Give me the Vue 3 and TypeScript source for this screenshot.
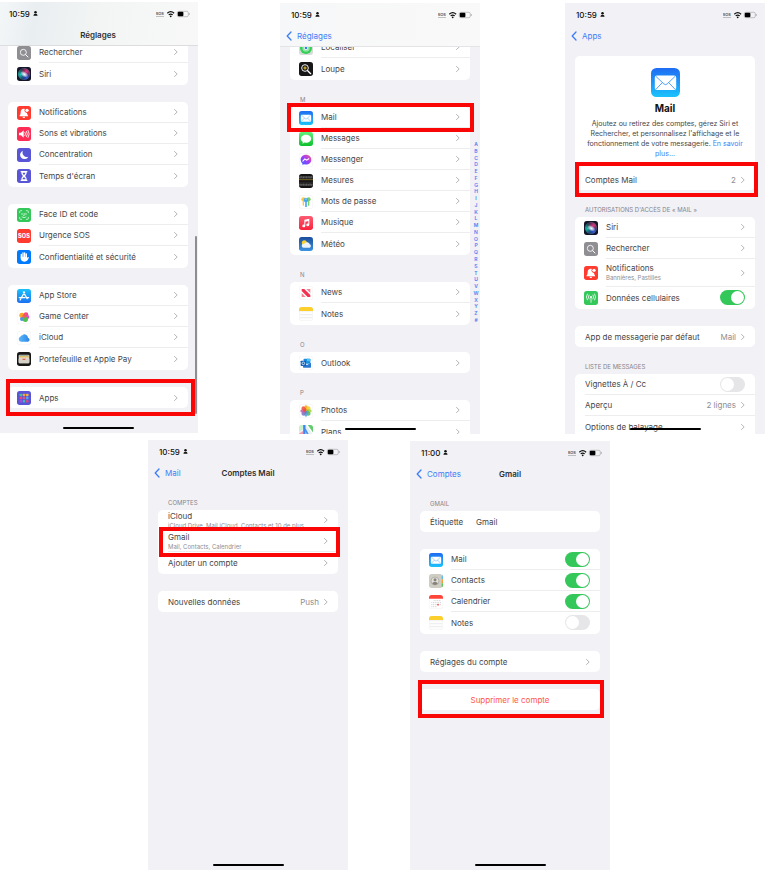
<script setup lang="ts">
interface Row {
  kind?: 'link' | 'toggle' | 'field' | 'danger'
  label: string
  sub?: string
  value?: string
  icon?: string
  on?: boolean
  dense?: boolean
  mark?: string
}

interface Section {
  title?: string
  hero?: boolean
  rows: Row[]
}

interface Screen {
  id: string
  time: string
  title?: string
  back?: string
  bar?: string
  index?: boolean
  scrollbar?: boolean
  sections: Section[]
}

const topRow: Screen[] = [
  {
    id: 'reglages',
    time: '10:59',
    title: 'Réglages',
    bar: 'bar-tinted',
    scrollbar: true,
    sections: [
      { rows: [{ label: 'Rechercher', icon: 'search' }, { label: 'Siri', icon: 'siri' }] },
      {
        rows: [
          { label: 'Notifications', icon: 'bell' },
          { label: 'Sons et vibrations', icon: 'sound' },
          { label: 'Concentration', icon: 'moon' },
          { label: "Temps d'écran", icon: 'hourglass' },
        ],
      },
      {
        rows: [
          { label: 'Face ID et code', icon: 'face' },
          { label: 'Urgence SOS', icon: 'sos' },
          { label: 'Confidentialité et sécurité', icon: 'hand' },
        ],
      },
      {
        rows: [
          { label: 'App Store', icon: 'store' },
          { label: 'Game Center', icon: 'game' },
          { label: 'iCloud', icon: 'cloud' },
          { label: 'Portefeuille et Apple Pay', icon: 'wallet' },
        ],
      },
      { rows: [{ label: 'Apps', icon: 'apps', mark: 'mark-apps' }] },
    ],
  },
  {
    id: 'apps',
    time: '10:59',
    back: 'Réglages',
    bar: 'bar-light',
    index: true,
    sections: [
      { rows: [{ label: 'Localiser', icon: 'find' }, { label: 'Loupe', icon: 'loupe' }] },
      {
        title: 'M',
        rows: [
          { label: 'Mail', icon: 'mail', mark: 'mark-mail' },
          { label: 'Messages', icon: 'messages' },
          { label: 'Messenger', icon: 'messenger' },
          { label: 'Mesures', icon: 'measure' },
          { label: 'Mots de passe', icon: 'keys' },
          { label: 'Musique', icon: 'music' },
          { label: 'Météo', icon: 'weather' },
        ],
      },
      { title: 'N', rows: [{ label: 'News', icon: 'news' }, { label: 'Notes', icon: 'notes' }] },
      { title: 'O', rows: [{ label: 'Outlook', icon: 'outlook' }] },
      { title: 'P', rows: [{ label: 'Photos', icon: 'photos' }, { label: 'Plans', icon: 'maps' }] },
    ],
  },
  {
    id: 'mail',
    time: '10:59',
    back: 'Apps',
    sections: [
      { hero: true, rows: [{ label: 'Comptes Mail', value: '2', mark: 'mark-accounts' }] },
      {
        title: "Autorisations d'accès de « Mail »",
        rows: [
          { label: 'Siri', icon: 'siri' },
          { label: 'Rechercher', icon: 'search' },
          { label: 'Notifications', icon: 'bell', sub: 'Bannières, Pastilles' },
          { kind: 'toggle', label: 'Données cellulaires', icon: 'cell', on: true },
        ],
      },
      { rows: [{ label: 'App de messagerie par défaut', value: 'Mail' }] },
      {
        title: 'Liste de messages',
        rows: [
          { kind: 'toggle', label: 'Vignettes À / Cc', on: false },
          { label: 'Aperçu', value: '2 lignes' },
          { label: 'Options de balayage' },
        ],
      },
    ],
  },
]

const bottomRow: Screen[] = [
  {
    id: 'comptes',
    time: '10:59',
    back: 'Mail',
    title: 'Comptes Mail',
    sections: [
      {
        title: 'Comptes',
        rows: [
          { label: 'iCloud', sub: 'iCloud Drive, Mail iCloud, Contacts et 10 de plus', dense: true },
          { label: 'Gmail', sub: 'Mail, Contacts, Calendrier', dense: true, mark: 'mark-gmail' },
          { label: 'Ajouter un compte' },
        ],
      },
      { rows: [{ label: 'Nouvelles données', value: 'Push' }] },
    ],
  },
  {
    id: 'gmail',
    time: '11:00',
    back: 'Comptes',
    title: 'Gmail',
    sections: [
      { title: 'Gmail', rows: [{ kind: 'field', label: 'Étiquette', value: 'Gmail' }] },
      {
        rows: [
          { kind: 'toggle', label: 'Mail', icon: 'mail', on: true },
          { kind: 'toggle', label: 'Contacts', icon: 'contacts', on: true },
          { kind: 'toggle', label: 'Calendrier', icon: 'calendar', on: true },
          { kind: 'toggle', label: 'Notes', icon: 'notes', on: false },
        ],
      },
      { rows: [{ label: 'Réglages du compte' }] },
      { rows: [{ kind: 'danger', label: 'Supprimer le compte', mark: 'mark-delete' }] },
    ],
  },
]

const rows = [
  { name: 'row-top', screens: topRow },
  { name: 'row-bottom', screens: bottomRow },
]
const letters = [...'ABCDEFGHIJKLMNOPQRSTUVWXYZ#']
const petals = ['#f7a11b', '#f2d21b', '#a8cf3a', '#4bb86a', '#4a9fd8', '#7b6fc4', '#c05fa6', '#ee4b3c']
const tagFor = (row: Row) =>
  row.kind === 'toggle' || row.kind === 'field' ? 'label' : row.kind === 'danger' ? 'button' : 'a'
</script>

<template>
  <svg class="sprite" aria-hidden="true">
    <defs>
      <linearGradient id="g-mail" x1="0" y1="0" x2="0" y2="1"><stop offset="0" stop-color="#1f6cf3" /><stop offset="1" stop-color="#1cc3fb" /></linearGradient>
      <linearGradient id="g-store" x1="0" y1="0" x2="0" y2="1"><stop offset="0" stop-color="#19c2fb" /><stop offset="1" stop-color="#1c70f2" /></linearGradient>
      <linearGradient id="g-green" x1="0" y1="0" x2="0" y2="1"><stop offset="0" stop-color="#62f07a" /><stop offset="1" stop-color="#0bbf2b" /></linearGradient>
      <linearGradient id="g-music" x1="0" y1="0" x2="0" y2="1"><stop offset="0" stop-color="#fb5c74" /><stop offset="1" stop-color="#fa233b" /></linearGradient>
      <linearGradient id="g-weather" x1="0" y1="0" x2="0" y2="1"><stop offset="0" stop-color="#1a4e9c" /><stop offset="1" stop-color="#3d93e0" /></linearGradient>
      <linearGradient id="g-cloud" x1="0" y1="0" x2="1" y2="0"><stop offset="0" stop-color="#59b9f8" /><stop offset="1" stop-color="#2b83ea" /></linearGradient>
      <linearGradient id="g-messenger" x1="0" y1="1" x2="1" y2="0"><stop offset="0" stop-color="#2f6bff" /><stop offset=".5" stop-color="#9c3bfa" /><stop offset="1" stop-color="#ff5b7f" /></linearGradient>
      <radialGradient id="g-siri-a" cx=".2" cy=".55" r=".5"><stop offset="0" stop-color="#17c5b5" /><stop offset="1" stop-color="#17c5b5" stop-opacity="0" /></radialGradient>
      <radialGradient id="g-siri-b" cx=".7" cy=".3" r=".5"><stop offset="0" stop-color="#e63b86" /><stop offset="1" stop-color="#e63b86" stop-opacity="0" /></radialGradient>
      <radialGradient id="g-siri-c" cx=".7" cy=".8" r=".45"><stop offset="0" stop-color="#3457e0" /><stop offset="1" stop-color="#3457e0" stop-opacity="0" /></radialGradient>
      <radialGradient id="g-siri-d" cx=".5" cy=".5" r=".5"><stop offset="0" stop-color="#fff" /><stop offset=".4" stop-color="#c9e8f5" stop-opacity=".8" /><stop offset="1" stop-color="#fff" stop-opacity="0" /></radialGradient>
      <clipPath id="c-tile"><rect width="42" height="42" rx="8" /></clipPath>
    </defs>

    <symbol id="i-search" viewBox="0 0 42 42">
      <rect width="42" height="42" rx="8" fill="#8e8e93" />
      <circle cx="19" cy="19" r="9" fill="none" stroke="#fff" stroke-width="2.600" />
      <path d="M26 26l7 7" stroke="#fff" stroke-width="3" stroke-linecap="round" />
    </symbol>
    <symbol id="i-siri" viewBox="0 0 42 42">
      <rect width="42" height="42" rx="8" fill="#15152b" />
      <circle cx="21" cy="21" r="18" fill="url(#g-siri-a)" />
      <circle cx="21" cy="21" r="18" fill="url(#g-siri-b)" />
      <circle cx="21" cy="21" r="18" fill="url(#g-siri-c)" />
      <circle cx="21" cy="21" r="17" fill="none" stroke="#5fc6c0" stroke-opacity=".45" stroke-width="1.5" />
      <ellipse cx="22" cy="22" rx="13" ry="8" transform="rotate(30 22 22)" fill="url(#g-siri-d)" />
    </symbol>
    <symbol id="i-bell" viewBox="0 0 42 42">
      <rect width="42" height="42" rx="8" fill="#ff3b30" />
      <path d="M20 8c-6 0-9 4.500-9 10 0 6-1 8-3.500 11 0 1 .5 1.500 1.500 1.500h23c1 0 1.500-.5 1.500-1.500C31 26 30.500 24 30 21a8 8 0 0 1-6.500-12.200C22.500 8.200 21 8 20 8z" fill="#fff" />
      <path d="M16.500 32h8a4 4 0 0 1-8 0z" fill="#fff" />
      <circle cx="30" cy="13" r="5" fill="#fff" />
    </symbol>
    <symbol id="i-sound" viewBox="0 0 42 42">
      <rect width="42" height="42" rx="8" fill="#ff2d55" />
      <path d="M6 17h6l8-7v22l-8-7H6z" fill="#fff" />
      <path d="M24 16q4 5 0 10M28.500 13q6 8 0 16M33 10q8 11 0 22" fill="none" stroke="#fff" stroke-width="2.500" stroke-linecap="round" />
    </symbol>
    <symbol id="i-moon" viewBox="0 0 42 42">
      <rect width="42" height="42" rx="8" fill="#5856d6" />
      <path d="M18 8a13 13 0 1 0 16 18A13 13 0 0 1 18 8z" fill="#fff" />
    </symbol>
    <symbol id="i-hourglass" viewBox="0 0 42 42">
      <rect width="42" height="42" rx="8" fill="#5856d6" />
      <path d="M11 6h20v4h-2c0 6-2 8-5 11 3 3 5 5 5 11h2v4H11v-4h2c0-6 2-8 5-11-3-3-5-5-5-11h-2z" fill="#fff" />
      <path d="M17 11h8c0 3-2 5-4 7-2-2-4-4-4-7zM16.500 31c0-4 2.500-5 4.500-6 2 1 4.500 2 4.500 6z" fill="#5856d6" />
    </symbol>
    <symbol id="i-face" viewBox="0 0 42 42">
      <rect width="42" height="42" rx="8" fill="#34c759" />
      <path d="M8 14v-3q0-3 3-3h3M28 8h3q3 0 3 3v3M34 28v3q0 3-3 3h-3M14 34h-3q-3 0-3-3v-3M15 16v4M27 16v4M21.500 16v7h-2M15 27q6 5 12 0" fill="none" stroke="#fff" stroke-width="2" stroke-linecap="round" />
    </symbol>
    <symbol id="i-hand" viewBox="0 0 42 42">
      <rect width="42" height="42" rx="8" fill="#007aff" />
      <path d="M13 22V13M18 20V9M23 20V8.500M28 21V12" stroke="#fff" stroke-width="4" stroke-linecap="round" />
      <path d="M11 20h19v4l3-3q3-1 2.500 1.500C33 30 30 35 22 35S11 30 11 24z" fill="#fff" />
    </symbol>
    <symbol id="i-store" viewBox="0 0 42 42">
      <rect width="42" height="42" rx="8" fill="url(#g-store)" />
      <path d="M23 9L12.500 27M19 9l11.500 20M7 26h17M30 26h5M11 30l-1.500 3" stroke="#fff" stroke-width="3.800" stroke-linecap="round" />
    </symbol>
    <symbol id="i-game" viewBox="0 0 42 42">
      <rect x=".5" y=".5" width="41" height="41" rx="8" fill="#fff" stroke="#e4e4e8" />
      <circle cx="15" cy="16" r="8" fill="#f9a825" />
      <circle cx="27" cy="14" r="7" fill="#f9497a" />
      <circle cx="15" cy="27" r="6" fill="#4f8ff5" />
      <circle cx="31" cy="21" r="6" fill="#d94fd0" />
      <circle cx="25" cy="28" r="8" fill="#4cc24a" />
      <circle cx="22" cy="19" r="6" fill="#ef5c4c" opacity=".85" />
    </symbol>
    <symbol id="i-cloud" viewBox="0 0 42 42">
      <rect x=".5" y=".5" width="41" height="41" rx="8" fill="#fff" stroke="#e4e4e8" />
      <path d="M12 32a7.500 7.500 0 0 1-2-14.500A7 7 0 0 1 16 13a10 10 0 0 1 17 7 6.200 6.200 0 0 1 0 12z" fill="url(#g-cloud)" />
    </symbol>
    <symbol id="i-wallet" viewBox="0 0 42 42">
      <rect width="42" height="42" rx="8" fill="#171717" />
      <rect x="5" y="8" width="32" height="26" rx="3" fill="#d9d5cc" />
      <path d="M7 10h28v3H7z" fill="#7e9a83" /><path d="M7 13h28v4H7z" fill="#edc04f" /><path d="M7 17h28v3H7z" fill="#e6e1d2" />
      <path d="M5 20h9q2 0 3 2 4 4 8 0 1-2 3-2h9v11q0 3-3 3H8q-3 0-3-3z" fill="#d6d2c8" />
      <path d="M15 20h12q-2 4-6 4t-6-4z" fill="#e2574b" />
    </symbol>
    <symbol id="i-apps" viewBox="0 0 42 42">
      <rect width="42" height="42" rx="8" fill="#5856d6" />
      <rect x="8" y="8" width="7.500" height="7.500" rx="2" fill="#3fc39a" /><rect x="17.500" y="8" width="7.500" height="7.500" rx="2" fill="#f2a13c" /><rect x="27" y="8" width="7.500" height="7.500" rx="2" fill="#f0b14a" />
      <rect x="8" y="17.500" width="7.500" height="7.500" rx="2" fill="#ec4778" /><rect x="17.500" y="17.500" width="7.500" height="7.500" rx="2" fill="#e0527e" /><rect x="27" y="17.500" width="7.500" height="7.500" rx="2" fill="#4fa7ee" />
      <rect x="8" y="27" width="7.500" height="7.500" rx="2" fill="#ab4bd8" /><rect x="17.500" y="27" width="7.500" height="7.500" rx="2" fill="#38b9bd" /><rect x="27" y="27" width="7.500" height="7.500" rx="2" fill="#e2467e" />
    </symbol>
    <symbol id="i-find" viewBox="0 0 42 42">
      <rect width="42" height="42" rx="8" fill="#d8dad9" />
      <circle cx="21" cy="21" r="18" fill="#35cf58" />
      <circle cx="21" cy="21" r="11" fill="#8fe7a0" />
      <circle cx="21" cy="21" r="6" fill="#fff" /><circle cx="21" cy="21" r="4" fill="#2f7ff0" />
    </symbol>
    <symbol id="i-loupe" viewBox="0 0 42 42">
      <rect width="42" height="42" rx="8" fill="#171717" />
      <circle cx="18" cy="18" r="10" fill="none" stroke="#fff" stroke-width="2.800" />
      <path d="M26 26l9 9" stroke="#fff" stroke-width="4" stroke-linecap="round" />
      <path d="M18 13v10M13 18h10" stroke="#fbd12c" stroke-width="2.800" />
    </symbol>
    <symbol id="i-mail" viewBox="0 0 42 42">
      <rect width="42" height="42" rx="8" fill="url(#g-mail)" />
      <rect x="5.500" y="11" width="31" height="21" rx="3" fill="#fff" />
      <path d="M7 12l11.500 11q2.500 2.200 5 0L35 12M7 31l9.500-10M35 31l-9.500-10" fill="none" stroke="#2b90f7" stroke-width="1.200" />
    </symbol>
    <symbol id="i-messages" viewBox="0 0 42 42">
      <rect width="42" height="42" rx="8" fill="url(#g-green)" />
      <path d="M21 8C12 8 5.500 13.300 5.500 20c0 4 2.500 7.500 6.200 9.700 0 2-1.200 3.800-2.700 5 3 0 5.600-1.200 7.500-3.100 1.500.3 3 .4 4.500.4 9 0 15.500-5.300 15.500-12S30 8 21 8z" fill="#fff" />
    </symbol>
    <symbol id="i-messenger" viewBox="0 0 42 42">
      <rect x=".5" y=".5" width="41" height="41" rx="8" fill="#fff" stroke="#e4e4e8" />
      <path d="M21 5C12 5 5 11.500 5 20.200c0 4.600 2 8.500 5.200 11.200l.2 4.600 4.700-2q2.800.8 5.900.8c9 0 16-6.300 16-14.800S30 5 21 5z" fill="url(#g-messenger)" />
      <path d="M11.500 24.500l6-7 5 4 7-4" fill="none" stroke="#fff" stroke-width="3.200" stroke-linecap="round" stroke-linejoin="round" />
    </symbol>
    <symbol id="i-measure" viewBox="0 0 42 42">
      <rect width="42" height="42" rx="8" fill="#151515" />
      <path d="M0 10h42M0 32h42" stroke="#3a3a3a" stroke-width="7" />
      <path d="M3 7v6M8 7v4M13 7v6M18 7v4M23 7v6M28 7v4M33 7v6M38 7v4M3 29v6M8 31v4M13 29v6M18 31v4M23 29v6M28 31v4M33 29v6M38 31v4" stroke="#a8a8a8" stroke-width="1.300" />
      <path d="M0 17h42" stroke="#d9b634" stroke-width="1.500" /><path d="M0 25h42" stroke="#555" stroke-width="1" />
    </symbol>
    <symbol id="i-keys" viewBox="0 0 42 42">
      <rect x=".5" y=".5" width="41" height="41" rx="8" fill="#fff" stroke="#e4e4e8" />
      <circle cx="13" cy="13" r="6" fill="#f9c740" /><path d="M11 17h4v14l-2 2-2-2z" fill="#f9c740" />
      <circle cx="29" cy="13" r="6" fill="#7cd06a" /><path d="M27 17h4v14l-2 2-2-2z" fill="#7cd06a" />
      <circle cx="21" cy="15" r="7" fill="#46a9ee" /><path d="M18.500 19h5v15L21 37l-2.500-3z" fill="#46a9ee" /><circle cx="21" cy="12" r="1.800" fill="#fff" />
    </symbol>
    <symbol id="i-music" viewBox="0 0 42 42">
      <rect width="42" height="42" rx="8" fill="url(#g-music)" />
      <path d="M16 11.500L31 8v18.500a4.500 4 0 1 1-3-3.800V15l-9 2v13a4.500 4 0 1 1-3-3.800z" fill="#fff" />
    </symbol>
    <symbol id="i-weather" viewBox="0 0 42 42">
      <rect width="42" height="42" rx="8" fill="url(#g-weather)" />
      <circle cx="16" cy="17" r="7.500" fill="#fbd02f" />
      <path d="M14 32a6 6 0 0 1 0-12 5 5 0 0 1 3.500-1 8 8 0 0 1 14.500 3 5.200 5.200 0 0 1 0 10z" fill="#eaf2fb" />
    </symbol>
    <symbol id="i-news" viewBox="0 0 42 42">
      <rect x=".5" y=".5" width="41" height="41" rx="8" fill="#fff" stroke="#e4e4e8" />
      <path d="M8 9h8l18 18v6h-8L8 15z" fill="#f2304f" />
      <path d="M8 21l12 12H8zM34 21L22 9h12z" fill="#f77f92" />
    </symbol>
    <symbol id="i-notes" viewBox="0 0 42 42">
      <rect x=".5" y=".5" width="41" height="41" rx="8" fill="#fdfdfd" stroke="#e4e4e8" />
      <path d="M0 12V8q0-8 8-8h26q8 0 8 8v4z" fill="#fdcf2c" />
      <path d="M0 14h42" stroke="#bdbdbd" stroke-dasharray="1.500 1.500" /><path d="M3 23h36M3 32h36" stroke="#dcdce0" stroke-width="1.500" />
    </symbol>
    <symbol id="i-outlook" viewBox="0 0 42 42">
      <rect x=".5" y=".5" width="41" height="41" rx="8" fill="#fff" stroke="#e4e4e8" />
      <rect x="14" y="8" width="20" height="15" rx="1.500" fill="#1b8fe0" /><path d="M24 8h8.500q1.500 0 1.500 1.500V16H24z" fill="#4cc4f5" />
      <path d="M12 20l12 7 12-7v13q0 2-2 2H14q-2 0-2-2z" fill="#2a78cf" />
      <rect x="5" y="14" width="16" height="16" rx="2" fill="#0f5fb8" />
      <circle cx="13" cy="22" r="4" fill="none" stroke="#fff" stroke-width="2.200" />
    </symbol>
    <symbol id="i-photos" viewBox="0 0 42 42">
      <rect x=".5" y=".5" width="41" height="41" rx="8" fill="#fff" stroke="#e4e4e8" />
      <rect v-for="(c, i) in petals" :key="c" x="15.500" y="4" width="11" height="17" rx="5.500" :fill="c" opacity=".85" :transform="`rotate(${i * 45} 21 21)`" />
    </symbol>
    <symbol id="i-maps" viewBox="0 0 42 42">
      <g clip-path="url(#c-tile)">
        <rect width="42" height="42" fill="#e9eef0" />
        <path d="M0 0h14v10L0 20z" fill="#c9efcb" /><path d="M24 0h18v24z" fill="#5fce6b" /><path d="M0 26l12-8v24H0z" fill="#f29ab0" />
        <path d="M16 0v42" stroke="#3a86f0" stroke-width="7" /><path d="M18 12l16 30" stroke="#4a90f2" stroke-width="5" /><path d="M24 0l18 26" stroke="#fff" stroke-width="4" />
      </g>
    </symbol>
    <symbol id="i-cell" viewBox="0 0 42 42">
      <rect width="42" height="42" rx="8" fill="#34c759" />
      <circle cx="21" cy="18" r="3" fill="#fff" />
      <path d="M21 19v15M15 12q-4 6 0 12M27 12q4 6 0 12M10 9q-6 9 0 18M32 9q6 9 0 18" fill="none" stroke="#fff" stroke-width="2.400" stroke-linecap="round" />
    </symbol>
    <symbol id="i-contacts" viewBox="0 0 42 42">
      <g clip-path="url(#c-tile)">
        <rect width="42" height="42" fill="#cfcdc3" />
        <rect x="36" width="6" height="42" fill="#f3f3f0" /><path d="M37 4h5v12h-5z" fill="#5bb7f0" /><path d="M37 16h5v12h-5z" fill="#f59b34" /><path d="M37 28h5v11h-5z" fill="#5fc95c" />
        <circle cx="18" cy="21" r="12" fill="#e2e0d8" stroke="#8c8a82" stroke-width="1.500" />
        <circle cx="18" cy="17.500" r="4.500" fill="#85837b" /><path d="M9.500 28q2.500-5 8.500-5t8.500 5q-3 5-8.500 5t-8.500-5z" fill="#85837b" />
      </g>
    </symbol>
    <symbol id="i-calendar" viewBox="0 0 42 42">
      <rect x=".5" y=".5" width="41" height="41" rx="8" fill="#fff" stroke="#e4e4e8" />
      <path d="M0 11V8q0-8 8-8h26q8 0 8 8v3z" fill="#ff453a" />
      <path d="M14 17h22M7 23h29M7 29h29M7 35h17" stroke="#b9b9be" stroke-width="2" stroke-dasharray="3 2.200" /><circle cx="27" cy="29" r="2.500" fill="#ff453a" />
    </symbol>
    <symbol id="i-chevron" viewBox="0 0 4 8"><path d="M.5 1.500L3.200 4L.5 6.500" fill="none" stroke="currentColor" stroke-width=".9" stroke-linecap="round" stroke-linejoin="round" /></symbol>
    <symbol id="i-back" viewBox="0 0 6 10"><path d="M5 1L1.200 5L5 9" fill="none" stroke="currentColor" stroke-width="1.300" stroke-linecap="round" stroke-linejoin="round" /></symbol>
    <symbol id="i-person" viewBox="0 0 6 6"><circle cx="3" cy="1.600" r="1.500" fill="currentColor" /><path d="M.5 5.800q0-2.600 2.500-2.600t2.500 2.600z" fill="currentColor" /></symbol>
  </svg>

  <main class="page">
    <div v-for="line in rows" :key="line.name" class="line" :class="line.name">
      <section v-for="screen in line.screens" :key="screen.id" class="phone" :class="`phone-${screen.id}`">
        <header class="bar" :class="screen.bar">
          <div class="status">
            <span class="time">{{ screen.time }}</span>
            <svg class="person"><use href="#i-person" /></svg>
            <svg class="signals" viewBox="0 0 34 8">
              <text class="signal-text" x="3.800" y="4.600" text-anchor="middle">SOS</text>
              <path d="M.5 6.500h7" stroke="#888" stroke-width="1" stroke-dasharray="1 1" />
              <path d="M11.300 3.200q3.400-3 6.800 0M12.700 4.900q2-1.700 4 0" fill="none" stroke="#111" stroke-width="1.200" />
              <circle cx="14.700" cy="6.300" r=".9" fill="#111" />
              <rect x="21.300" y="1.300" width="11" height="5.400" rx="1.500" fill="none" stroke="#aaa" stroke-width=".7" />
              <rect x="21.800" y="1.800" width="5.600" height="4.400" rx="1" fill="#000" />
              <path d="M33.300 3v2" stroke="#aaa" stroke-width=".8" />
            </svg>
          </div>
          <div class="nav">
            <a v-if="screen.back" class="back" href="#">
              <svg class="back-icon"><use href="#i-back" /></svg>{{ screen.back }}
            </a>
            <h2 v-if="screen.title" class="title">{{ screen.title }}</h2>
          </div>
        </header>

        <div class="content">
          <div v-for="(section, s) in screen.sections" :key="s" class="group">
            <h3 v-if="section.title" class="group-title">{{ section.title }}</h3>
            <div class="card">
              <div v-if="section.hero" class="hero">
                <svg class="hero-icon"><use href="#i-mail" /></svg>
                <h1 class="hero-title">Mail</h1>
                <p class="hero-text">
                  Ajoutez ou retirez des comptes, gérez Siri et Rechercher, et personnalisez l'affichage et le
                  fonctionnement de votre messagerie. <a href="#">En savoir plus...</a>
                </p>
              </div>
              <ul class="list">
                <li v-for="row in section.rows" :key="row.label" class="item" :class="[row.mark, { marked: row.mark }]">
                  <component
                    :is="tagFor(row)"
                    class="row"
                    :class="{ 'has-icon': row.icon, tall: row.sub && !row.dense, dense: row.dense, danger: row.kind === 'danger' }"
                    :href="tagFor(row) === 'a' ? '#' : undefined"
                    :type="row.kind === 'danger' ? 'button' : undefined"
                  >
                    <svg v-if="row.icon === 'sos'" class="icon" viewBox="0 0 42 42">
                      <rect width="42" height="42" rx="8" fill="#ff3b30" />
                      <text class="sos-text" x="21" y="27" text-anchor="middle">SOS</text>
                    </svg>
                    <svg v-else-if="row.icon" class="icon"><use :href="`#i-${row.icon}`" /></svg>
                    <span class="body">
                      <span class="text" :class="{ 'field-label': row.kind === 'field' }">
                        <span class="label">{{ row.label }}</span>
                        <span v-if="row.sub" class="sub">{{ row.sub }}</span>
                      </span>
                      <input v-if="row.kind === 'toggle'" class="switch" type="checkbox" role="switch" :checked="row.on" />
                      <input v-else-if="row.kind === 'field'" class="field" type="text" :value="row.value" />
                      <template v-else-if="row.kind !== 'danger'">
                        <span v-if="row.value" class="value">{{ row.value }}</span>
                        <svg class="chevron"><use href="#i-chevron" /></svg>
                      </template>
                    </span>
                  </component>
                </li>
              </ul>
            </div>
          </div>
        </div>

        <nav v-if="screen.index" class="index" aria-label="Index">
          <a v-for="letter in letters" :key="letter" href="#">{{ letter }}</a>
        </nav>
        <div v-if="screen.scrollbar" class="scrollbar"></div>
        <div class="home"><span class="home-line"></span></div>
      </section>
    </div>
  </main>
</template>

<style>
body {
  margin: 0;
  background: #fff;
}
</style>

<style scoped>
* {
  box-sizing: border-box;
}
a {
  color: inherit;
  text-decoration: none;
}
h1,
h2,
h3,
p,
ul {
  margin: 0;
  padding: 0;
  font-weight: 400;
  list-style: none;
}
svg {
  display: block;
  flex: none;
}
.sprite {
  position: absolute;
  width: 0;
  height: 0;
}
.page {
  display: flex;
  flex-direction: column;
  gap: 6px;
  min-height: 100vh;
  padding-top: 2px;
  overflow: hidden;
  font-family: Inter, Roboto, sans-serif;
  font-size: 8px;
  line-height: 10px;
  color: #464648;
}
.line {
  display: grid;
}
.row-top {
  grid-template-columns: 198fr 82fr 200fr 85fr 200fr 3fr;
}
.row-bottom {
  flex: 1;
  grid-template-columns: 148fr 200fr 62fr 200fr 158fr;
}
.phone {
  --edge-left: 10px;
  --edge-right: 10px;
  position: relative;
  display: flex;
  flex-direction: column;
  min-width: 0;
  overflow: hidden;
  background: #f2f1f6;
}
.phone + .phone {
  margin-top: 1px;
}
.row-top .phone {
  aspect-ratio: 200 / 431;
}
.row-top .phone-reglages {
  --edge-left: 8px;
  grid-column: 1;
  aspect-ratio: 198 / 431;
}
.phone-apps {
  grid-column: 3;
}
.phone-mail {
  grid-column: 5;
}
.phone-comptes {
  grid-column: 2;
}
.phone-gmail {
  grid-column: 4;
}

.bar {
  position: relative;
  z-index: 2;
  flex: none;
}
.bar-tinted {
  background: linear-gradient(100deg, #f4f7f8 0%, #e9eef1 18%, #f3f5f4 50%, #f8f8f9 100%);
  border-bottom: 1px solid #dddde0;
}
.bar-light {
  background: linear-gradient(100deg, #f6f7f8, #f9f9f9);
  border-bottom: 1px solid #e4e4e6;
}
.status {
  display: flex;
  align-items: center;
  height: 23px;
  padding-left: calc(var(--edge-left) + 1px);
  padding-right: 8px;
  color: #111;
}
.time {
  font-weight: 500;
}
.person {
  width: 5px;
  height: 5px;
  margin-left: 3px;
}
.signals {
  width: 34px;
  height: 8px;
  margin-left: auto;
}
.signal-text {
  font-size: 4px;
  font-weight: 600;
  fill: #555;
}
.sos-text {
  font-size: 17px;
  font-weight: 800;
  fill: #fff;
}
.nav {
  display: grid;
  grid-template-columns: 1fr auto 1fr;
  align-items: center;
  height: 20px;
  padding-left: calc(var(--edge-left) - 4px);
  padding-right: 6px;
}
.back {
  grid-column: 1;
  display: flex;
  align-items: center;
  gap: 5px;
  color: #3c7df8;
}
.back-icon {
  width: 6px;
  height: 10px;
}
.title {
  grid-column: 2;
  font-size: 8px;
  font-weight: 600;
  color: #2f2f31;
}

.content {
  flex: none;
  padding: 0 var(--edge-right) 0 var(--edge-left);
}
.phone-reglages .content {
  margin-top: -4px;
}
.phone-apps .content {
  margin-top: -10px;
}
.phone-mail .content {
  padding-top: 10px;
}
.group + .group {
  margin-top: 17px;
}
.group-title {
  height: 27px;
  padding: 16px 10px 0;
  font-size: 6px;
  line-height: 8px;
  text-transform: uppercase;
  color: #85858b;
}
.group + .group:has(.group-title) {
  margin-top: 0;
}
.card {
  background: #fff;
  border-radius: 5px;
}
.item {
  position: relative;
}
.item:last-child:not(:first-child) {
  padding-bottom: 1px;
}
.row {
  display: flex;
  gap: 8px;
  width: 100%;
  height: 21px;
  padding: 0 0 0 10px;
  border: 0;
  background: none;
  font: inherit;
  color: inherit;
}
.row.has-icon {
  padding-left: 9px;
}
.row.tall {
  height: 28px;
}
.icon {
  width: 14px;
  height: 14px;
  align-self: center;
}
.body {
  flex: 1;
  display: flex;
  align-items: center;
  gap: 5px;
  min-width: 0;
  padding-right: 10px;
}
.item:not(:last-child) .body {
  border-bottom: 1px solid #ededf0;
}
.text {
  flex: 1;
  display: flex;
  flex-direction: column;
  white-space: nowrap;
}
.text .label {
  line-height: 10px;
}
.sub {
  font-size: 6px;
  line-height: 9px;
  color: #8e8e93;
}
.dense .text {
  padding-top: 2px;
}
.dense .label {
  line-height: 9px;
}
.field-label {
  flex: 0 0 41px;
}
.field {
  flex: 1;
  min-width: 0;
  padding: 0;
  border: 0;
  outline: 0;
  background: none;
  font: inherit;
  color: inherit;
}
.value {
  color: #8e8e93;
}
.chevron {
  width: 4px;
  height: 8px;
  color: #adadb2;
}
.switch {
  position: relative;
  flex: none;
  width: 25px;
  height: 15px;
  margin: 0;
  appearance: none;
  border-radius: 8px;
  background: #e6e6e8;
}
.switch::before {
  content: '';
  position: absolute;
  top: 1px;
  left: 1px;
  width: 13px;
  height: 13px;
  border-radius: 50%;
  background: #fff;
}
.switch:checked {
  background: #34c759;
}
.switch:checked::before {
  left: 11px;
}
.danger {
  color: #ff5750;
}
.danger .text {
  text-align: center;
}
.danger .body {
  padding-right: 0;
  align-self: center;
}
.row.danger {
  padding: 0;
}

.marked {
  z-index: 1;
}
.marked::after {
  content: '';
  position: absolute;
  border: 4px solid #fb0606;
  pointer-events: none;
}
.mark-apps::after {
  inset: -8px -7px -8px -2px;
}
.mark-mail::after {
  inset: -4px -4px -4px -3px;
}
.mark-accounts::after {
  inset: -7px -3px -7px 0;
}
.mark-gmail::after {
  inset: -4px -2px -5px 1px;
}
.mark-delete::after {
  inset: -9px -4px -8px -2px;
}

.hero {
  display: flex;
  flex-direction: column;
  align-items: center;
  padding: 12px 10px 11px;
  text-align: center;
}
.hero-icon {
  width: 29px;
  height: 29px;
}
.hero-title {
  margin-top: 4px;
  font-size: 10px;
  line-height: 14px;
  font-weight: 700;
  color: #111;
}
.hero-text {
  margin-top: 4px;
  margin-bottom: -1px;
  font-size: 7px;
  line-height: 10px;
}
.hero-text a {
  color: #3c7df8;
}

.index {
  position: absolute;
  top: 138px;
  right: 1px;
  display: flex;
  flex-direction: column;
  justify-content: space-between;
  width: 6px;
  height: 182px;
  font-size: 5px;
  line-height: 6px;
  font-weight: 600;
  text-align: center;
  color: #4a7ff0;
}
.scrollbar {
  position: absolute;
  top: 234px;
  right: 1px;
  bottom: 19px;
  width: 2px;
  border-radius: 1px;
  background: #8d8d92;
}
.home {
  position: absolute;
  inset: auto 0 4px 0;
  z-index: 2;
  display: flex;
  justify-content: center;
  padding: 0 var(--edge-right) 0 var(--edge-left);
}
.home-line {
  width: 71px;
  height: 2px;
  border-radius: 1px;
  background: #000;
}
</style>
